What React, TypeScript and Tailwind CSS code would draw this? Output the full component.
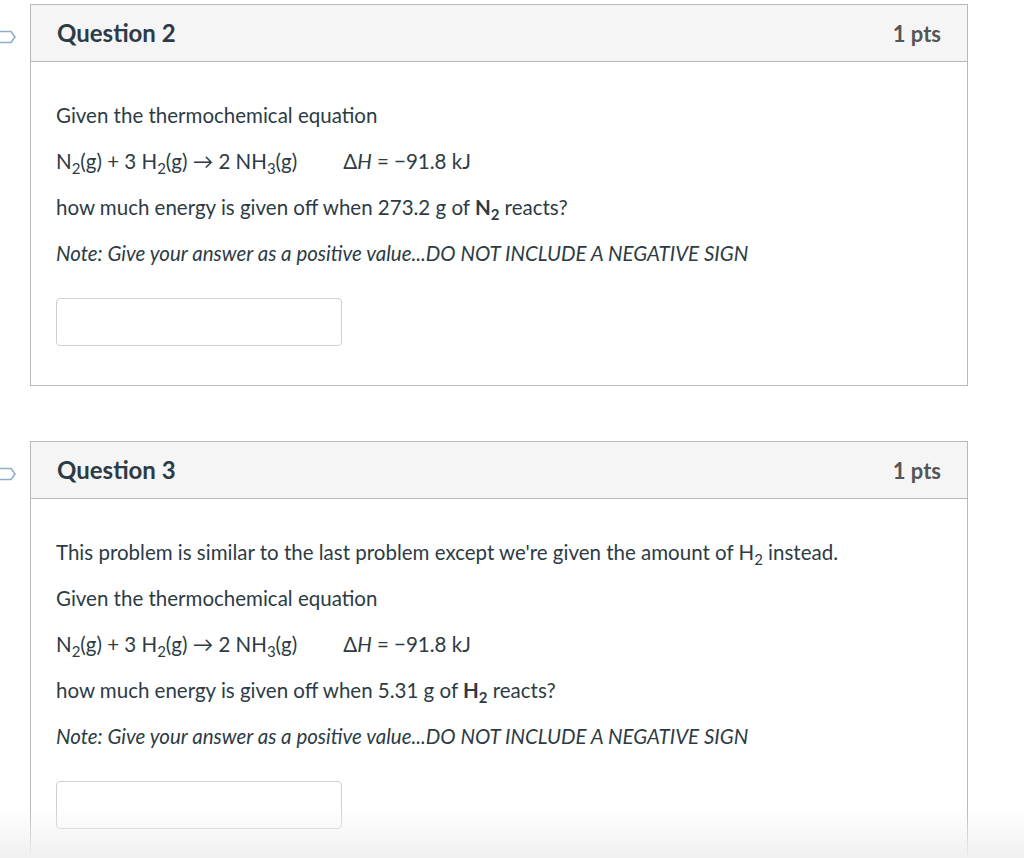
import React from 'react';

function Flag() {
  return (
    <svg width="20" height="14" viewBox="0 0 20 14" className="absolute left-[-3px] top-[26px]">
      <path d="M0 1.5 H14 L18 7 L14 12.5 H0" fill="none" stroke="#8eb0c6" strokeWidth="1.6" strokeLinejoin="round" />
    </svg>
  );
}

function Sub({ children }: { children: React.ReactNode }) {
  return <span className="text-[15px] relative top-[5px] align-baseline leading-none">{children}</span>;
}

function Equation() {
  return (
    <p className="mb-[18px]">
      <span>
        N<Sub>2</Sub>(g) + 3 H<Sub>2</Sub>(g) → 2 NH<Sub>3</Sub>(g)
      </span>
      <span className="ml-[46px]">
        Δ<i>H</i> = −91.8 kJ
      </span>
    </p>
  );
}

function Note() {
  return (
    <p className="mb-[18px] italic">
      Note: Give your answer as a positive value...DO NOT INCLUDE A NEGATIVE SIGN
    </p>
  );
}

function Answer() {
  return (
    <div className="mt-[31px] w-[286px] h-[48px] rounded-[4px] border border-[#cfcfcf] bg-white" />
  );
}

function QuestionCard({ title, children }: { title: string; children: React.ReactNode }) {
  return (
    <div className="relative">
      <Flag />
      <div className="ml-[30px] w-[938px] border border-[#b9b9b9] bg-white">
        <div className="h-[57px] flex items-center justify-between px-[26px] bg-[#f5f5f5] border-b border-[#b9b9b9]">
          <h2 className="text-[24px] font-bold text-[#2d3b45]">{title}</h2>
          <span className="text-[22px] font-bold text-[#555555]">1 pts</span>
        </div>
        <div className="pt-[39px] pb-[39px] px-[25px] text-[20.5px] leading-[28px] text-[#2d3b45]">
          {children}
        </div>
      </div>
    </div>
  );
}

export default function App() {
  return (
    <div className="relative w-[1024px] h-[858px] overflow-hidden bg-white" style={{ fontFamily: 'Lato, "Open Sans", sans-serif' }}>
      <div className="pt-[4px] flex flex-col gap-[55px]">
        <QuestionCard title="Question 2">
          <p className="mb-[18px]">Given the thermochemical equation</p>
          <Equation />
          <p className="mb-[18px]">
            how much energy is given off when 273.2 g of <b>N<Sub>2</Sub></b> reacts?
          </p>
          <Note />
          <Answer />
        </QuestionCard>
        <QuestionCard title="Question 3">
          <p className="mb-[18px]">
            This problem is similar to the last problem except we're given the amount of H<Sub>2</Sub> instead.
          </p>
          <p className="mb-[18px]">Given the thermochemical equation</p>
          <Equation />
          <p className="mb-[18px]">
            how much energy is given off when 5.31 g of <b>H<Sub>2</Sub></b> reacts?
          </p>
          <Note />
          <Answer />
        </QuestionCard>
      </div>
      <div className="absolute left-0 right-0 bottom-0 h-[50px] bg-gradient-to-b from-transparent to-[#f0f0f0] pointer-events-none" />
    </div>
  );
}
